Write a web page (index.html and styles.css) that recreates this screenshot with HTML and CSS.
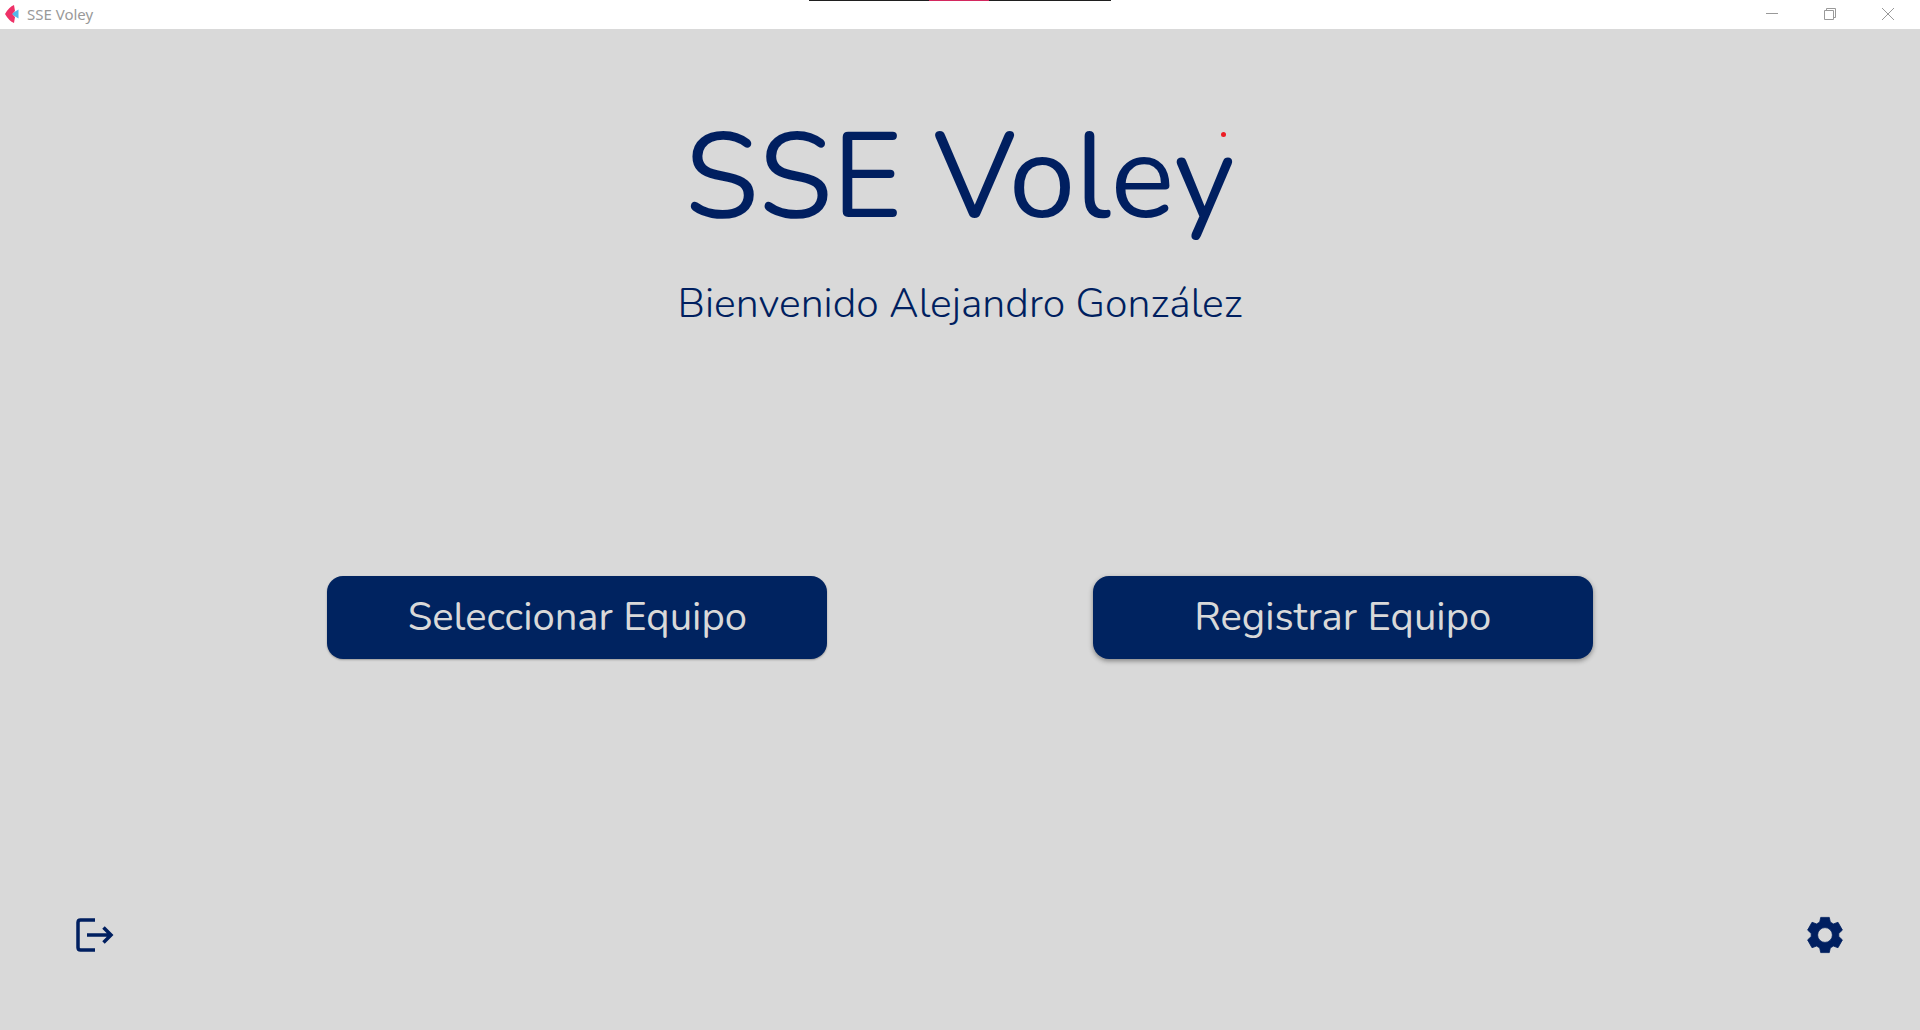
FILE: index.html
```html
<!DOCTYPE html>
<html lang="es">
<head>
<meta charset="utf-8">
<meta name="viewport" content="width=device-width, initial-scale=1">
<title>SSE Voley</title>
<link rel="stylesheet" href="styles.css">
</head>
<body>
<header class="titlebar">
  <div class="app-name">
    <svg class="app-logo" width="16" height="20" viewBox="0 0 16 20" aria-hidden="true">
      <path d="M14.500 5.500v9L7 10Z" fill="#55b7e8"/>
      <path d="M10 1 11 7 8 10 11 13 10 19Q5 17 1 10 5 3 10 1Z" fill="#ee3167"/>
    </svg>
    <span>SSE Voley</span>
  </div>
  <div class="top-strip"></div>
  <div class="window-controls">
    <button type="button" aria-label="Minimizar"><svg width="12" height="12" viewBox="0 0 12 12"><path d="M0 5.500h12"/></svg></button>
    <button type="button" aria-label="Restaurar"><svg width="12" height="12" viewBox="0 0 12 12"><path d="M.5 2.500h9v9h-9zM2.500 2.500v-2h9v9h-2"/></svg></button>
    <button type="button" aria-label="Cerrar"><svg width="12" height="12" viewBox="0 0 12 12"><path d="M0 0l12 12M12 0L0 12"/></svg></button>
  </div>
</header>
<main class="home">
  <h1 class="title">SSE Voley<span class="dot"></span></h1>
  <p class="welcome">Bienvenido Alejandro González</p>
  <div class="actions">
    <button type="button" class="action">Seleccionar Equipo</button>
    <button type="button" class="action raised">Registrar Equipo</button>
  </div>
  <nav class="tools">
    <button type="button" class="tool" aria-label="Cerrar sesión">
      <svg width="44" height="44" viewBox="0 0 44 44"><path d="M22 7H7.500Q5 7 5 9.500V34.500Q5 37 7.500 37H22M14 22H38M30.500 14.500 38 22 30.500 29.500" fill="none" stroke="#001f60" stroke-width="3.500"/></svg>
    </button>
    <button type="button" class="tool" aria-label="Configuración">
      <svg width="44" height="44" viewBox="-22 -22 44 44"><path fill="#001f60" fill-rule="evenodd" stroke="#001f60" stroke-width=".8" stroke-linejoin="round" d="M-5.300-12.900-4.300-17.600H4.300L5.300-12.900 8.370-11.100 13-12.700 17.400-4.900 13.800-1.600V1.600L17.400 4.900 13 12.700 8.370 11.100 5.300 12.900 4.300 17.600H-4.300L-5.300 12.900-8.370 11.100-13 12.700-17.400 4.900-13.800 1.600V-1.600L-17.400-4.900-13-12.700-8.370-11.100ZM7.400 0A7.400 7.400 0 1 0-7.400 0 7.400 7.400 0 1 0 7.400 0Z"/></svg>
    </button>
  </nav>
</main>
</body>
</html>
```
FILE: styles.css
```css
* { box-sizing: border-box; }

body {
  margin: 0;
  min-height: 100vh;
  display: flex;
  flex-direction: column;
  background: #d9d9d9;
  color: #001f60;
  font-family: Nunito, "Open Sans", sans-serif;
}

button {
  border: 0;
  padding: 0;
  font: inherit;
  cursor: pointer;
}

.titlebar {
  display: grid;
  grid-template-columns: 1fr 302px 1fr;
  height: 29px;
  background: #fff;
  color: #999;
}

.app-name {
  display: flex;
  align-items: center;
  gap: 7px;
  height: 28px;
  padding-left: 4px;
  font: 15px/28px "Noto Sans", sans-serif;
}

.top-strip {
  height: 1px;
  background: linear-gradient(to right, #1f1f1f 120px, #d4285f 120px 180px, #1f1f1f 180px);
}

.window-controls {
  display: flex;
  justify-content: flex-end;
  padding-right: 3px;
}

.window-controls button {
  display: grid;
  place-items: center;
  width: 58px;
  height: 28px;
  background: none;
}

.window-controls svg {
  fill: none;
  stroke: #999;
}

.home {
  flex: 1;
  display: flex;
  flex-direction: column;
}

.title {
  position: relative;
  align-self: center;
  margin: 67px 0 0;
  font-size: 120px;
  font-weight: 400;
  line-height: 164px;
}

.dot {
  position: absolute;
  top: 36px;
  right: 9px;
  width: 5px;
  height: 5px;
  border-radius: 50%;
  background: #ed1c24;
}

.welcome {
  margin: 17px 0 0;
  font-size: 41px;
  font-weight: 300;
  line-height: 54px;
  text-align: center;
}

.actions {
  display: flex;
  justify-content: space-evenly;
  margin-top: 245px;
  padding: 0 62px;
}

.action {
  width: 500px;
  height: 83px;
  padding-bottom: 2px;
  border-radius: 16px;
  background: #002360;
  color: #d9d9d9;
  font-size: 40px;
  box-shadow: 0 1px 2px rgba(0, 0, 0, 0.3);
}

.raised { box-shadow: 0 2px 5px rgba(0, 0, 0, 0.4); }

.tools {
  display: flex;
  justify-content: space-between;
  margin-top: auto;
  padding: 0 73px 73px;
}

.tool {
  display: grid;
  place-items: center;
  width: 44px;
  height: 44px;
  background: none;
}
```
